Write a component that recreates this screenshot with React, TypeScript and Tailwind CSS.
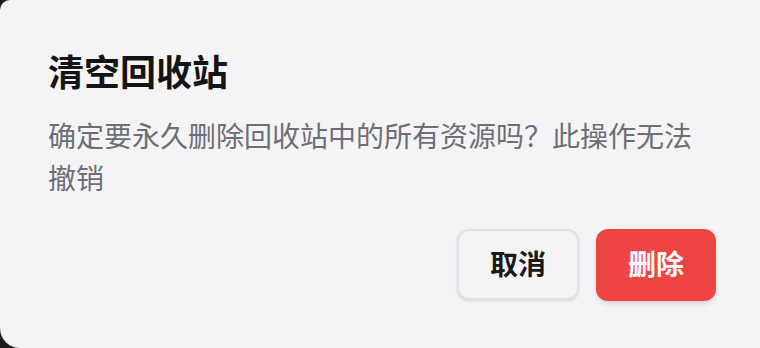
import React from 'react';

const font = { fontFamily: '"Inter", "Noto Sans CJK SC", sans-serif' };

export default function App() {
  return (
    <div className="w-[760px] h-[348px] bg-[#1c1c1e] overflow-hidden" style={font}>
      <div className="h-full bg-[#f4f4f6] rounded-tl-[10px] rounded-bl-[20px] pt-[48px] pl-[48px] pr-[44px] flex flex-col">
        <h2 className="text-[36px] leading-[50px] font-bold text-[#141414]">清空回收站</h2>
        <p className="mt-[18px] text-[28px] leading-[42px] text-[#6e6e76]">
          确定要永久删除回收站中的所有资源吗？此操作无法撤销
        </p>
        <div className="mt-[29px] flex justify-end gap-[17px]">
          <button className="w-[122px] h-[71px] rounded-[12px] border-2 border-[#e2e2e6] bg-[#f4f4f6] shadow-sm text-[28px] font-bold text-[#1a1a1a]">
            取消
          </button>
          <button className="w-[120px] h-[72px] rounded-[12px] bg-[#ef4444] shadow-md text-[28px] font-bold text-white">
            删除
          </button>
        </div>
      </div>
    </div>
  );
}
